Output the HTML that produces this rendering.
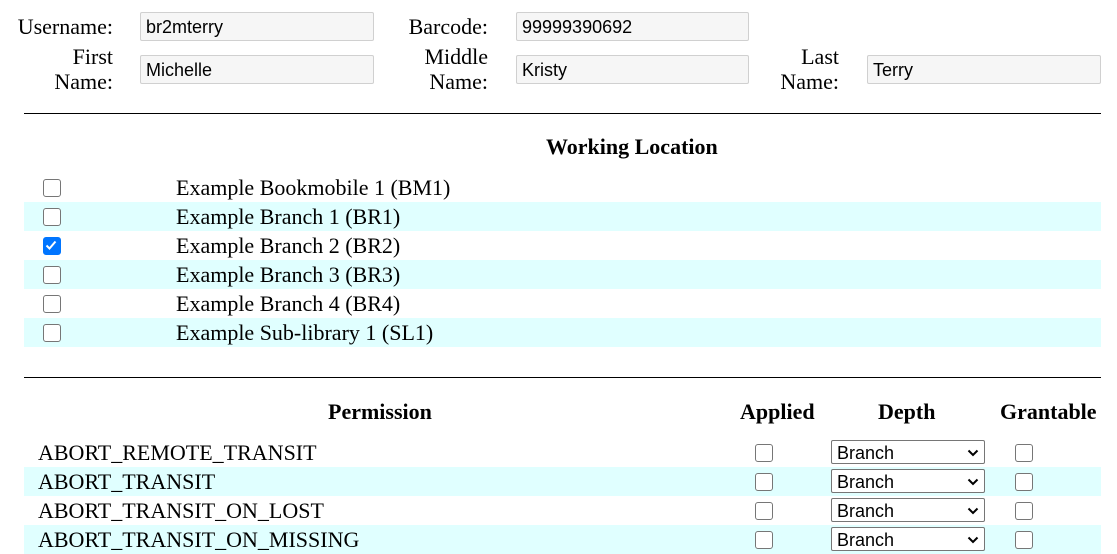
<!DOCTYPE html><html><head><style>
body{margin:0;width:1117px;height:553px;overflow:hidden;background:#fff;font-family:"Liberation Serif",serif;font-size:22px;color:#000;position:relative}
.a{position:absolute;white-space:nowrap}
.lbl{position:absolute;text-align:right;line-height:25px;white-space:nowrap}
.in{position:absolute;border:1px solid #d0d0d0;border-radius:2px;background:#f6f6f6;font-family:"Liberation Sans",sans-serif;font-size:18px;line-height:28px;padding-left:5px;box-sizing:border-box;height:29px}
.hr{position:absolute;left:24px;width:1077px;height:1px;background:#000}
.row{position:absolute;left:24px;width:1077px;height:29px;line-height:29px}
.cy{background:#e0ffff}
.cb{position:absolute;width:16px;height:16px;border:1px solid #767676;border-radius:3px;background:#fff}
.sel{position:absolute;width:154px;height:24px;border:1px solid #767676;border-radius:2px;background:#fff;font-family:"Liberation Sans",sans-serif;font-size:18px;line-height:24px;padding-left:5px;box-sizing:border-box}
.sel svg{position:absolute;right:5px;top:8px}
b{position:absolute;font-size:22px;white-space:nowrap}
</style></head><body>
<div class="lbl" style="left:0;width:113px;top:14px">Username:</div>
<div class="in" style="left:140px;top:12px;width:234px">br2mterry</div>
<div class="lbl" style="left:380px;width:108px;top:14px">Barcode:</div>
<div class="in" style="left:516px;top:12px;width:233px">99999390692</div>
<div class="lbl" style="left:0;width:113px;top:44px">First<br>Name:</div>
<div class="in" style="left:140px;top:55px;width:234px">Michelle</div>
<div class="lbl" style="left:380px;width:108px;top:44px">Middle<br>Name:</div>
<div class="in" style="left:516px;top:55px;width:233px">Kristy</div>
<div class="lbl" style="left:740px;width:99px;top:44px">Last<br>Name:</div>
<div class="in" style="left:867px;top:55px;width:234px">Terry</div>
<div class="hr" style="top:113px"></div>
<b style="left:546px;top:134px">Working Location</b>
<div class="row" style="top:173px"><div class="cb" style="left:19px;top:6px"></div><span class="a" style="left:152px">Example Bookmobile 1 (BM1)</span></div>
<div class="row cy" style="top:202px"><div class="cb" style="left:19px;top:6px"></div><span class="a" style="left:152px">Example Branch 1 (BR1)</span></div>
<div class="row" style="top:231px"><div class="cb" style="left:19px;top:6px;background:#0075ff;border-color:#0075ff"><svg width="16" height="16" viewBox="0 0 16 16" style="position:absolute;left:-1px;top:-1px"><path d="M3.5 8.5l3 3 6-7" stroke="#fff" stroke-width="2" fill="none"/></svg></div><span class="a" style="left:152px">Example Branch 2 (BR2)</span></div>
<div class="row cy" style="top:260px"><div class="cb" style="left:19px;top:6px"></div><span class="a" style="left:152px">Example Branch 3 (BR3)</span></div>
<div class="row" style="top:289px"><div class="cb" style="left:19px;top:6px"></div><span class="a" style="left:152px">Example Branch 4 (BR4)</span></div>
<div class="row cy" style="top:318px"><div class="cb" style="left:19px;top:6px"></div><span class="a" style="left:152px">Example Sub-library 1 (SL1)</span></div>
<div class="hr" style="top:377px"></div>
<b style="left:328px;top:399px">Permission</b>
<b style="left:740px;top:399px">Applied</b>
<b style="left:878px;top:399px">Depth</b>
<b style="left:1000px;top:399px">Grantable</b>
<div class="row" style="top:438px"><span class="a" style="left:14px">ABORT_REMOTE_TRANSIT</span><div class="cb" style="left:731px;top:6px"></div><div class="sel" style="left:807px;top:2px">Branch<svg width="12" height="8" viewBox="0 0 12 8"><path d="M1.5 1.5l4.5 4.5 4.5-4.5" stroke="#000" stroke-width="2" fill="none"/></svg></div><div class="cb" style="left:991px;top:6px"></div></div>
<div class="row cy" style="top:467px"><span class="a" style="left:14px">ABORT_TRANSIT</span><div class="cb" style="left:731px;top:6px"></div><div class="sel" style="left:807px;top:2px">Branch<svg width="12" height="8" viewBox="0 0 12 8"><path d="M1.5 1.5l4.5 4.5 4.5-4.5" stroke="#000" stroke-width="2" fill="none"/></svg></div><div class="cb" style="left:991px;top:6px"></div></div>
<div class="row" style="top:496px"><span class="a" style="left:14px">ABORT_TRANSIT_ON_LOST</span><div class="cb" style="left:731px;top:6px"></div><div class="sel" style="left:807px;top:2px">Branch<svg width="12" height="8" viewBox="0 0 12 8"><path d="M1.5 1.5l4.5 4.5 4.5-4.5" stroke="#000" stroke-width="2" fill="none"/></svg></div><div class="cb" style="left:991px;top:6px"></div></div>
<div class="row cy" style="top:525px"><span class="a" style="left:14px">ABORT_TRANSIT_ON_MISSING</span><div class="cb" style="left:731px;top:6px"></div><div class="sel" style="left:807px;top:2px">Branch<svg width="12" height="8" viewBox="0 0 12 8"><path d="M1.5 1.5l4.5 4.5 4.5-4.5" stroke="#000" stroke-width="2" fill="none"/></svg></div><div class="cb" style="left:991px;top:6px"></div></div>
</body></html>
